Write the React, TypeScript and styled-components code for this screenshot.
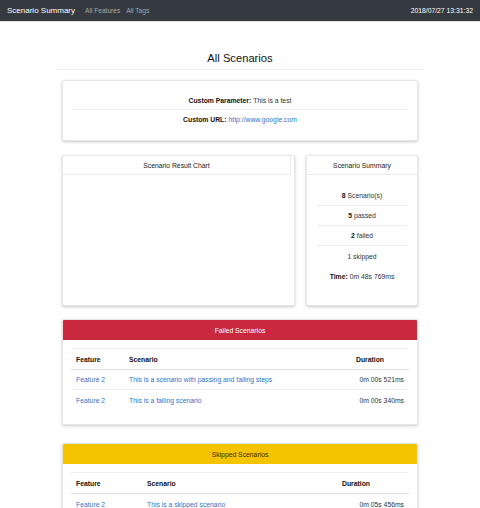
import React from "react";
import styled, { createGlobalStyle } from "styled-components";

const Global = createGlobalStyle`
  html, body { margin: 0; padding: 0; background: #fff; }
  body { font-family: "Liberation Sans", Arial, Helvetica, sans-serif; color: #212529; font-size: 6.8px; }
  * { box-sizing: border-box; }
`;

const Nav = styled.nav`
  height: 22px;
  background: #343a40;
  display: flex;
  align-items: center;
  padding: 0 7px;
  border-bottom: 1px solid #e4e4e4;
`;
const Brand = styled.span`
  color: #fff;
  font-size: 8px;
  margin-right: 10px;
`;
const NavLink = styled.span`
  color: rgba(255, 255, 255, 0.55);
  font-size: 6.6px;
  margin-right: 6px;
`;
const NavDate = styled.span`
  margin-left: auto;
  color: #fff;
  font-size: 6.8px;
`;

const Container = styled.main`
  width: 370px;
  margin: 0 auto;
  padding-top: 29px;
  display: flex;
  flex-direction: column;
`;
const Title = styled.h1`
  margin: 0;
  font-size: 11.2px;
  font-weight: 400;
  text-align: center;
  line-height: 14px;
  color: #111;
`;
const Rule = styled.hr`
  margin: 4px 0 0;
  border: 0;
  border-top: 1px solid #ececec;
`;

const Card = styled.section<{ $mt: number }>`
  margin: ${(p) => p.$mt}px 7px 0;
  background: #fff;
  border: 1px solid #e6e6e6;
  border-radius: 2px;
  box-shadow: 0 1px 3px rgba(0, 0, 0, 0.22);
  display: flex;
  flex-direction: column;
  overflow: hidden;
`;

const InfoList = styled.div`
  padding: 11px 10px 12px;
`;
const InfoRow = styled.div<{ $line?: boolean }>`
  height: 18px;
  display: flex;
  align-items: center;
  justify-content: center;
  border-bottom: ${(p) => (p.$line ? "1px solid #ececec" : "none")};
  color: #333;
`;
const Label = styled.b`
  color: #111;
  margin-right: 2px;
`;
const Link = styled.span`
  color: #2f74cc;
`;

const Split = styled.div`
  margin: 14px 7px 0;
  display: grid;
  grid-template-columns: 233px 112px;
  gap: 11px;
`;
const Panel = styled.section`
  background: #fff;
  border: 1px solid #e6e6e6;
  border-radius: 2px;
  box-shadow: 0 1px 3px rgba(0, 0, 0, 0.22);
  height: 151px;
  display: flex;
  flex-direction: column;
`;
const PanelHead = styled.div<{ $inner?: boolean }>`
  height: 19px;
  display: flex;
  align-items: center;
  justify-content: center;
  border-bottom: 1px solid #ececec;
  border-right: ${(p) => (p.$inner ? "1px solid #ececec" : "none")};
  margin-right: ${(p) => (p.$inner ? "3px" : "0")};
  color: #222;
`;
const StatList = styled.div`
  padding: 11px 10px 0;
`;
const Stat = styled.div<{ $line?: boolean }>`
  height: 20px;
  display: flex;
  align-items: center;
  justify-content: center;
  border-bottom: ${(p) => (p.$line ? "1px solid #ececec" : "none")};
  color: #333;
  b { color: #111; margin-right: 2px; }
`;

const BandHead = styled.div<{ $bg: string; $fg: string }>`
  height: 20px;
  background: ${(p) => p.$bg};
  color: ${(p) => p.$fg};
  display: flex;
  align-items: center;
  justify-content: center;
`;
const TableWrap = styled.div<{ $pb: number }>`
  padding: 8px 9px ${(p) => p.$pb}px 8px;
`;
const Table = styled.div<{ $cols: string }>`
  display: grid;
  grid-template-columns: ${(p) => p.$cols};
  border-top: 1px solid #ececec;
`;
const Th = styled.div`
  height: 21px;
  display: flex;
  align-items: center;
  padding: 0 5px;
  font-weight: 700;
  color: #111;
  border-bottom: 1px solid #e2e2e2;
`;
const Td = styled.div<{ $right?: boolean; $link?: boolean; $line?: boolean }>`
  height: 20px;
  display: flex;
  align-items: center;
  justify-content: ${(p) => (p.$right ? "flex-end" : "flex-start")};
  padding: 0 5px;
  color: ${(p) => (p.$link ? "#2f74cc" : "#333")};
  border-bottom: ${(p) => (p.$line ? "1px solid #ececec" : "none")};
`;

type Row = { feature: string; scenario: string; duration: string };

const ScenarioTable = ({ rows, cols }: { rows: Row[]; cols: string }) => (
  <Table $cols={cols}>
    <Th>Feature</Th>
    <Th>Scenario</Th>
    <Th>Duration</Th>
    {rows.map((r, i) => {
      const line = i < rows.length - 1;
      return (
        <React.Fragment key={i}>
          <Td $link $line={line}>{r.feature}</Td>
          <Td $link $line={line}>{r.scenario}</Td>
          <Td $right $line={line}>{r.duration}</Td>
        </React.Fragment>
      );
    })}
  </Table>
);

export default function App() {
  return (
    <>
      <Global />
      <Nav>
        <Brand>Scenario Summary</Brand>
        <NavLink>All Features</NavLink>
        <NavLink>All Tags</NavLink>
        <NavDate>2018/07/27 13:31:32</NavDate>
      </Nav>
      <Container>
        <Title>All Scenarios</Title>
        <Rule />
        <Card $mt={10}>
          <InfoList>
            <InfoRow $line>
              <Label>Custom Parameter:</Label> This is a test
            </InfoRow>
            <InfoRow>
              <Label>Custom URL:</Label> <Link>http://www.google.com</Link>
            </InfoRow>
          </InfoList>
        </Card>
        <Split>
          <Panel>
            <PanelHead $inner>Scenario Result Chart</PanelHead>
          </Panel>
          <Panel>
            <PanelHead>Scenario Summary</PanelHead>
            <StatList>
              <Stat $line><b>8</b> Scenario(s)</Stat>
              <Stat $line><b>5</b> passed</Stat>
              <Stat $line><b>2</b> failed</Stat>
              <Stat>1 skipped</Stat>
              <Stat><b>Time:</b> 0m 48s 769ms</Stat>
            </StatList>
          </Panel>
        </Split>
        <Card $mt={13}>
          <BandHead $bg="#c9283f" $fg="#fff">Failed Scenarios</BandHead>
          <TableWrap $pb={14}>
            <ScenarioTable
              cols="53px 227px 58px"
              rows={[
                { feature: "Feature 2", scenario: "This is a scenario with passing and failing steps", duration: "0m 00s 521ms" },
                { feature: "Feature 2", scenario: "This is a failing scenario", duration: "0m 00s 340ms" },
              ]}
            />
          </TableWrap>
        </Card>
        <Card $mt={18}>
          <BandHead $bg="#f5c400" $fg="#3a3000">Skipped Scenarios</BandHead>
          <TableWrap $pb={14}>
            <ScenarioTable
              cols="71px 195px 72px"
              rows={[
                { feature: "Feature 2", scenario: "This is a skipped scenario", duration: "0m 05s 456ms" },
              ]}
            />
          </TableWrap>
        </Card>
      </Container>
    </>
  );
}
